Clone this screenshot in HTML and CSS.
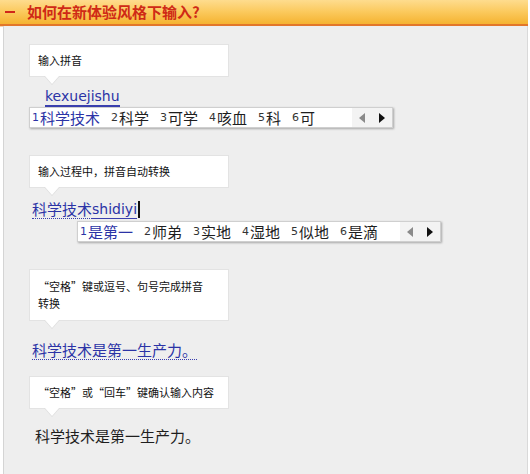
FILE: index.html
```html
<!DOCTYPE html>
<html lang="zh-CN">
<head>
<meta charset="utf-8">
<title>如何在新体验风格下输入?</title>
<link rel="stylesheet" href="styles.css">
</head>
<body>
<div class="page">
  <div class="header">
    <span class="dash"></span>
    <h1 class="title">如何在新体验风格下输入?</h1>
  </div>
  <div class="content">
    <div class="step">
      <div class="tip">输入拼音</div>
      <div class="compose compose-1"><span class="pinyin pinyin-thick">kexuejishu</span></div>
      <div class="cands">
        <div class="cand-list">
          <span class="cand active"><span class="num">1</span>科学技术</span>
          <span class="cand"><span class="num">2</span>科学</span>
          <span class="cand"><span class="num">3</span>可学</span>
          <span class="cand"><span class="num">4</span>咳血</span>
          <span class="cand"><span class="num">5</span>科</span>
          <span class="cand"><span class="num">6</span>可</span>
        </div>
        <div class="cand-nav">
          <svg class="arrow" width="7" height="10" viewBox="0 0 7 10"><path d="M6 0 L6 10 L0 5 Z" fill="#8a8a8a"/></svg>
          <svg class="arrow" width="7" height="10" viewBox="0 0 7 10"><path d="M1 0 L1 10 L7 5 Z" fill="#111"/></svg>
        </div>
      </div>
    </div>

    <div class="step step-gap">
      <div class="tip">输入过程中，拼音自动转换</div>
      <div class="compose compose-2"><span class="hanzi dotted">科学技术</span><span class="pinyin pinyin-thin">shidiyi</span><span class="caret"></span></div>
      <div class="cands cands-2">
        <div class="cand-list">
          <span class="cand active"><span class="num">1</span>是第一</span>
          <span class="cand"><span class="num">2</span>师弟</span>
          <span class="cand"><span class="num">3</span>实地</span>
          <span class="cand"><span class="num">4</span>湿地</span>
          <span class="cand"><span class="num">5</span>似地</span>
          <span class="cand"><span class="num">6</span>是滴</span>
        </div>
        <div class="cand-nav">
          <svg class="arrow" width="7" height="10" viewBox="0 0 7 10"><path d="M6 0 L6 10 L0 5 Z" fill="#8a8a8a"/></svg>
          <svg class="arrow" width="7" height="10" viewBox="0 0 7 10"><path d="M1 0 L1 10 L7 5 Z" fill="#111"/></svg>
        </div>
      </div>
    </div>

    <div class="step step-gap">
      <div class="tip tip-two">“空格”键或逗号、句号完成拼音<br>转换</div>
      <div class="compose compose-3"><span class="hanzi dotted">科学技术是第一生产力。</span></div>
    </div>

    <div class="step step-gap-small">
      <div class="tip">“空格”或“回车”键确认输入内容</div>
      <div class="result">科学技术是第一生产力。</div>
    </div>
  </div>
</div>
</body>
</html>
```

FILE: styles.css
```css
html, body {
  margin: 0;
  padding: 0;
  background: #ffffff;
}

body {
  font-family: "Noto Sans CJK SC", "DejaVu Sans", sans-serif;
  width: 530px;
  height: 474px;
  overflow: hidden;
}

.page {
  display: flex;
  flex-direction: column;
  height: 474px;
}

.header {
  height: 24px;
  display: flex;
  align-items: center;
  background: linear-gradient(to bottom, #fedc8e 0%, #fbc95c 50%, #f5b331 100%);
  border-bottom: 2px solid #e2762a;
  box-shadow: 0 1px 0 #f7d3b0;
  margin-right: 2px;
}

.dash {
  width: 10px;
  height: 2px;
  background: #d0261a;
  margin-left: 5px;
  margin-right: 12px;
}

.title {
  margin: 0;
  font-size: 15px;
  font-weight: bold;
  color: #cf2a16;
  line-height: 20px;
  letter-spacing: 0;
}

.content {
  flex: 1;
  margin-left: 3px;
  margin-right: 2px;
  background: #eeeeee;
  border-left: 1px solid #d4d4d4;
  border-right: 1px solid #d9d9d9;
  padding-top: 18px;
  padding-left: 25px;
}

.step-gap {
  margin-top: 27px;
}

.step-gap-small {
  margin-top: 16px;
}

.tip {
  position: relative;
  width: 182px;
  padding: 8px 8px 8px 8px;
  background: #ffffff;
  border: 1px solid #e3e3e3;
  font-size: 11px;
  line-height: 15px;
  color: #111111;
}

.tip-two {
  line-height: 17px;
}

.tip::before,
.tip::after {
  content: "";
  position: absolute;
  left: 14px;
  width: 0;
  height: 0;
  border-left: 8px solid transparent;
  border-right: 8px solid transparent;
}

.tip::before {
  bottom: -9px;
  border-top: 9px solid #dedede;
}

.tip::after {
  bottom: -8px;
  left: 15px;
  border-left-width: 7px;
  border-right-width: 7px;
  border-top: 8px solid #ffffff;
}

.compose {
  display: flex;
  align-items: flex-end;
  color: #2b33a6;
}

.compose-1 {
  height: 30px;
  padding-left: 16px;
}

.compose-2 {
  height: 31px;
  padding-left: 3px;
  padding-bottom: 2px;
}

.compose-3 {
  height: 39px;
  padding-left: 3px;
}

.pinyin {
  font-family: "DejaVu Sans", sans-serif;
  font-size: 14px;
}

.pinyin-thick {
  line-height: 17px;
  border-bottom: 2px solid #3a3fae;
}

.pinyin-thin {
  line-height: 18px;
  border-bottom: 1px solid #3a3fae;
}

.hanzi {
  font-size: 15px;
  line-height: 18px;
}

.dotted {
  border-bottom: 1px dotted #3a3fae;
}

.caret {
  width: 2px;
  height: 17px;
  background: #111111;
  margin-left: 1px;
  margin-bottom: 1px;
}

.cands {
  display: flex;
  width: 362px;
  height: 19px;
  background: #ffffff;
  border: 1px solid #cfcfcf;
  box-shadow: 1px 1px 2px rgba(0, 0, 0, 0.3);
}

.cands-2 {
  margin-left: 48px;
}

.cand-list {
  flex: 1;
  display: flex;
  align-items: center;
  padding-left: 2px;
  font-size: 15px;
  color: #1e1e1e;
  white-space: nowrap;
}

.cand {
  display: flex;
  align-items: center;
  margin-right: 11px;
  line-height: 19px;
}

.cand.active {
  color: #2b33a6;
}

.num {
  font-family: "DejaVu Sans", sans-serif;
  font-size: 11px;
  width: 8px;
}

.cand .num {
  color: #333333;
}

.cand.active .num {
  color: #2b33a6;
}

.cand-nav {
  width: 40px;
  display: flex;
  align-items: center;
  justify-content: center;
  gap: 12px;
  background: #f3f3f3;
}

.arrow {
  display: block;
}

.result {
  margin-top: 17px;
  padding-left: 6px;
  font-size: 15px;
  line-height: 20px;
  color: #1e1e1e;
}
```
